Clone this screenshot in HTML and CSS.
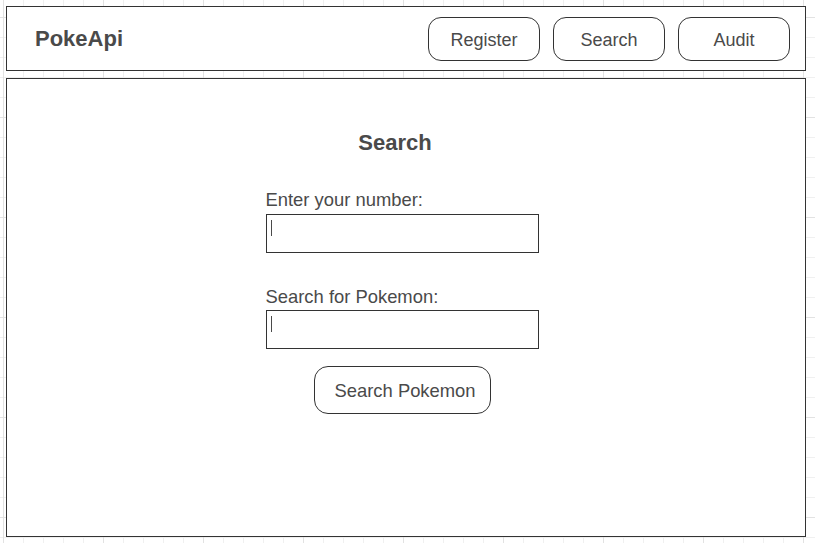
FILE: index.html
```html
<!DOCTYPE html>
<html>
<head>
<meta charset="utf-8">
<title>PokeApi</title>
<link rel="stylesheet" href="styles.css">
</head>
<body>
<div class="page">
  <header class="topbar">
    <div class="brand">PokeApi</div>
    <nav class="nav">
      <button class="nav-btn">Register</button>
      <button class="nav-btn">Search</button>
      <button class="nav-btn">Audit</button>
    </nav>
  </header>
  <main class="panel">
    <form class="form">
      <h1 class="title">Search</h1>
      <label class="label">Enter your number:</label>
      <div class="field"><span class="caret"></span></div>
      <label class="label second">Search for Pokemon:</label>
      <div class="field"><span class="caret"></span></div>
      <div class="actions"><button type="button" class="submit">Search Pokemon</button></div>
    </form>
  </main>
</div>
</body>
</html>
```
FILE: styles.css
```css
html, body {
  margin: 0;
  padding: 0;
}
body {
  width: 815px;
  height: 543px;
  overflow: hidden;
  font-family: "Liberation Sans", Arial, sans-serif;
  color: #4a4a4a;
  background-color: #fff;
  background-image:
    linear-gradient(to right, #e2e2e2 1px, transparent 1px),
    linear-gradient(to bottom, #e2e2e2 1px, transparent 1px),
    linear-gradient(to right, #f0f0f0 1px, transparent 1px),
    linear-gradient(to bottom, #f0f0f0 1px, transparent 1px);
  background-size: 100px 100px, 100px 100px, 20px 20px, 20px 20px;
  background-position: 3px 17px, 3px 17px, 3px 17px, 3px 17px;
}
.page {
  padding: 6px 0 0 6px;
  width: 800px;
}
.topbar {
  box-sizing: border-box;
  height: 65px;
  border: 1px solid #333;
  background: #fff;
  display: flex;
  align-items: center;
  justify-content: space-between;
  padding: 0 15px 0 28px;
}
.brand {
  font-size: 22px;
  font-weight: bold;
  line-height: 25px;
}
.nav {
  display: flex;
  gap: 13px;
}
.nav-btn {
  box-sizing: border-box;
  width: 112px;
  height: 44px;
  border: 1px solid #333;
  border-radius: 13px;
  background: #fff;
  color: #4a4a4a;
  font-family: inherit;
  font-size: 18px;
  padding: 3px 0 0;
}
.panel {
  box-sizing: border-box;
  margin-top: 7px;
  height: 459px;
  border: 1px solid #333;
  background: #fff;
  display: flex;
  justify-content: center;
  padding-top: 51px;
  padding-right: 8px;
}
.form {
  width: 273px;
  display: flex;
  flex-direction: column;
  margin: 0;
}
.title {
  margin: 0 14px 34px 0;
  font-size: 22px;
  line-height: 25px;
  font-weight: bold;
  text-align: center;
}
.label {
  font-size: 18.4px;
  line-height: 21px;
  margin-bottom: 4px;
}
.label.second {
  margin-top: 33px;
  margin-bottom: 3px;
}
.field {
  box-sizing: border-box;
  height: 39px;
  border: 1px solid #333;
  background: #fff;
  padding: 5px 0 0 4px;
}
.caret {
  display: block;
  width: 1px;
  height: 16px;
  background: #4a4a4a;
}
.actions {
  display: flex;
  justify-content: center;
  margin-top: 17px;
}
.submit {
  box-sizing: border-box;
  width: 177px;
  height: 48px;
  border: 1px solid #333;
  border-radius: 14px;
  background: #fff;
  color: #4a4a4a;
  font-family: inherit;
  font-size: 18.4px;
  padding: 2px 0 0 20px;
  text-align: left;
  white-space: nowrap;
}
```
